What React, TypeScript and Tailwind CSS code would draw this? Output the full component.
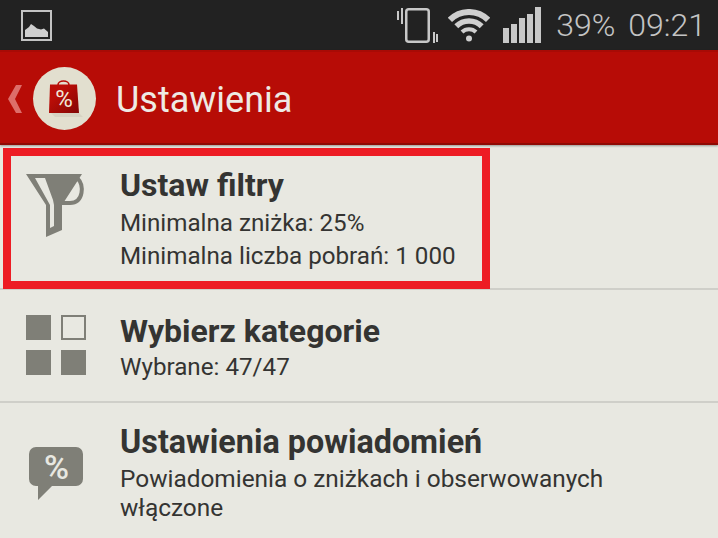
export default function App() {
  return (
    <div className="w-[718px] h-[538px] overflow-hidden bg-[#e8e8e1] flex flex-col font-['Roboto',sans-serif]">
      <div className="h-[50px] shrink-0 bg-[#222222] flex items-center justify-between pl-[21px] pr-[12px]">
        <svg width="31" height="31" viewBox="0 0 31 31" className="mt-[1px]">
          <rect x="1" y="1" width="29" height="29" fill="none" stroke="#c4c4c4" strokeWidth="2" />
          <path d="M4 27V20L8 17L10 14L13 16L16 18.500L20 19.500L23 18.500L27 22V27Z" fill="#cfcfcf" />
        </svg>
        <div className="flex items-center">
          <svg width="42" height="40" viewBox="0 0 42 40" className="mr-[9px]">
            <rect x="9.250" y="4.250" width="22.500" height="32.500" rx="2.500" fill="none" stroke="#c8c8c8" strokeWidth="2.500" />
            <path d="M0 6H2V15H0ZM4 3H6V19H4ZM36 27H38V38H36ZM39 29H41V37H39Z" fill="#c8c8c8" />
          </svg>
          <svg width="42" height="34" viewBox="0 0 42 34" className="mr-[13px] mt-[2px]">
            <path d="M1.900 10.900A27 27 0 0 1 40.100 10.900" fill="none" stroke="#cfcfcf" strokeWidth="6" />
            <path d="M8.300 17.300A18 18 0 0 1 33.700 17.300" fill="none" stroke="#cfcfcf" strokeWidth="5.500" />
            <path d="M14 23A10 10 0 0 1 28 23" fill="none" stroke="#cfcfcf" strokeWidth="4" />
            <circle cx="21" cy="29.500" r="3" fill="#cfcfcf" />
          </svg>
          <div className="flex items-end gap-[2px] h-[36px] mr-[15px]">
            <div className="w-[6px] h-[15px] bg-[#c8c8c8]" />
            <div className="w-[6px] h-[19px] bg-[#c8c8c8]" />
            <div className="w-[6px] h-[25px] bg-[#c8c8c8]" />
            <div className="w-[6px] h-[29px] bg-[#c8c8c8]" />
            <div className="w-[6px] h-[36px] bg-[#c8c8c8]" />
          </div>
          <span className="text-[32px] leading-[36px] text-[#c4c4c4] font-light mr-[13px]">39%</span>
          <span className="text-[32px] leading-[36px] text-[#c4c4c4] font-light">09:21</span>
        </div>
      </div>
      <div className="h-[95px] shrink-0 bg-[#b70c06] border-t-2 border-t-[#a80b05] border-b-2 border-b-[#8f0a04] flex items-center relative z-10 pt-[2px] shadow-[0_1px_2px_rgba(0,0,0,0.35)]">
        <svg width="15" height="28" viewBox="0 0 15 28" className="ml-[8px] mr-[10px]">
          <path d="M8 0H14L7 14L14 28H8L0 14Z" fill="#dd6e6a" />
        </svg>
        <div className="w-[63px] h-[63px] rounded-full bg-[#e2dfcf] flex items-center justify-center">
          <svg width="36" height="38" viewBox="0 0 36 38" className="ml-[2px] mt-[1px]">
            <defs>
              <linearGradient id="bag" x1="0" y1="0" x2="1" y2="1">
                <stop offset="0.3" stopColor="#bb0d07" />
                <stop offset="1" stopColor="#830705" />
              </linearGradient>
            </defs>
            <path d="M10 6V5A5.500 4 0 0 1 21 5V6" fill="none" stroke="#b70c06" strokeWidth="1.600" />
            <path d="M3 33L31 33L35 37H7Z" fill="#d6d3c3" />
            <path d="M2 4.500H29L31 33H1Z" fill="url(#bag)" />
            <text x="16" y="26.500" textAnchor="middle" fontSize="24" fontWeight="400" fill="#f0e8da" fontFamily="Roboto, sans-serif">%</text>
          </svg>
        </div>
        <span className="ml-[20px] mt-[3px] text-[36px] leading-[42px] text-[#eeeae4]">Ustawienia</span>
      </div>
      <div className="relative h-[145px] shrink-0 border-b-2 border-[#cfcfc9] flex items-start">
        <div className="w-[120px] shrink-0 pl-[26px] pt-[29px]">
          <svg width="60" height="64" viewBox="0 0 60 64" className="block">
            <path d="M0 0H56L36 31V56L20 63V31Z" fill="#7f7f77" />
            <path d="M9 4H19L27 26L28 31V52L24 54V31Z" fill="#e8e8e1" />
            <path d="M52 5C58 10 58 29 44 29H36" fill="none" stroke="#7f7f77" strokeWidth="4" />
          </svg>
        </div>
        <div className="pt-[22px] text-[#343432]">
          <div className="text-[32px] leading-[36px] font-bold">Ustaw filtry</div>
          <div className="text-[24.200px] leading-[34px] mt-[3px]">Minimalna zniżka: 25%</div>
          <div className="text-[24.200px] leading-[34px] -mt-[1px]">Minimalna liczba pobrań: 1 000</div>
        </div>
        <div className="absolute left-[3px] top-[3px] w-[487px] h-[141px] border-8 border-[#ed1c24]" />
      </div>
      <div className="h-[113px] shrink-0 border-b-2 border-[#cfcfc9] flex items-start">
        <div className="w-[120px] shrink-0 pl-[26px] pt-[25px]">
          <div className="grid grid-cols-[25px_25px] gap-[10px]">
            <div className="h-[25px] bg-[#7f7f77]" />
            <div className="h-[25px] border-2 border-[#7f7f77]" />
            <div className="h-[25px] bg-[#7f7f77]" />
            <div className="h-[25px] bg-[#7f7f77]" />
          </div>
        </div>
        <div className="pt-[23px] text-[#343432]">
          <div className="text-[32px] leading-[36px] font-bold">Wybierz kategorie</div>
          <div className="text-[24.200px] leading-[33px] mt-[2px]">Wybrane: 47/47</div>
        </div>
      </div>
      <div className="flex-1 flex items-start">
        <div className="w-[120px] shrink-0 pl-[29px] pt-[44px]">
          <svg width="54" height="54" viewBox="0 0 54 54" className="block">
            <path d="M7 0H47A7 7 0 0 1 54 7V32A7 7 0 0 1 47 39H23L9 53V39H7A7 7 0 0 1 0 32V7A7 7 0 0 1 7 0Z" fill="#7f7f77" />
            <text x="27.500" y="31.500" textAnchor="middle" fontSize="34" fontWeight="500" fill="#e8e8e1" fontFamily="Roboto, sans-serif">%</text>
          </svg>
        </div>
        <div className="pt-[21px] text-[#343432]">
          <div className="text-[32.300px] leading-[36px] font-bold">Ustawienia powiadomień</div>
          <div className="text-[24.400px] leading-[29px] mt-[4px] w-[560px]">Powiadomienia o zniżkach i obserwowanych włączone</div>
        </div>
      </div>
    </div>
  );
}
